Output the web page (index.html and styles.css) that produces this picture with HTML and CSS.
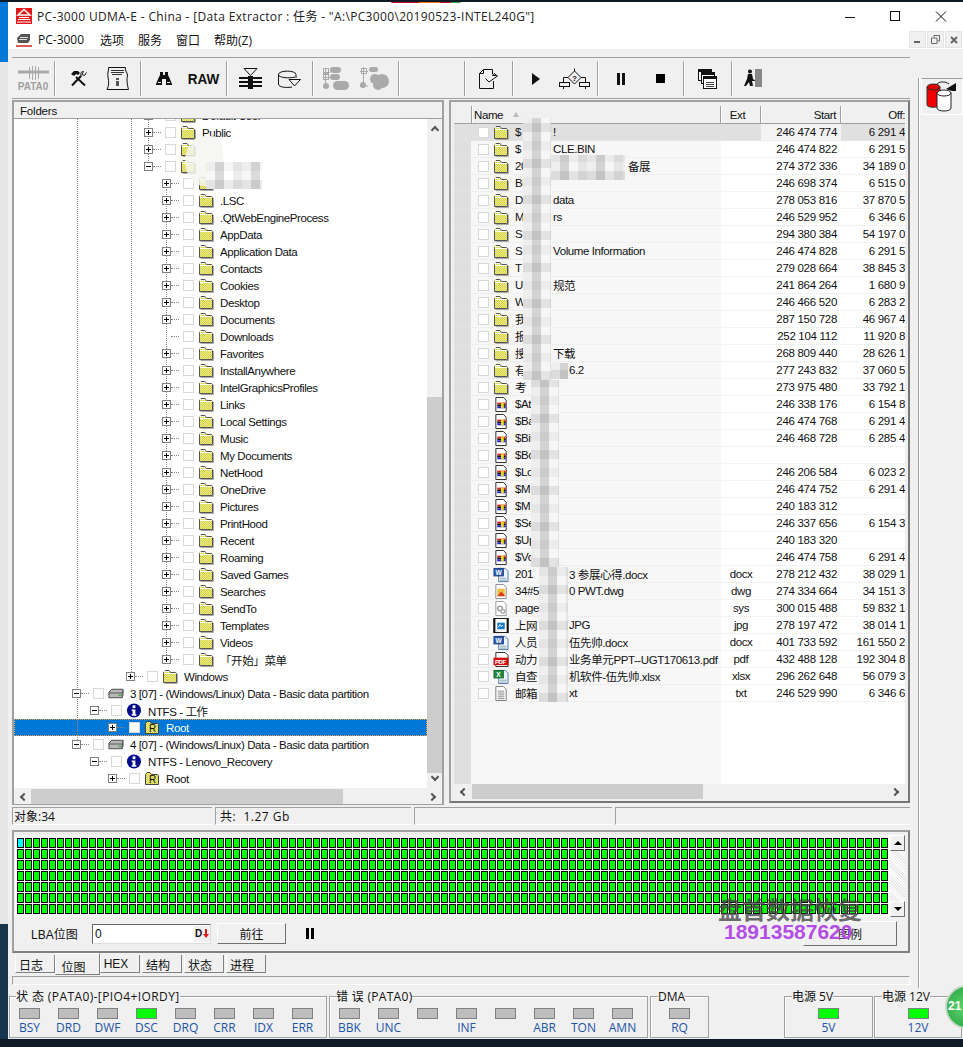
FILE: index.html
```html
<!DOCTYPE html>
<html>
<head>
<meta charset="utf-8">
<title>PC-3000 UDMA-E</title>
<link rel="stylesheet" href="styles.css">
</head>
<body>
<svg class="defs" width="0" height="0">
	<defs>
		<pattern id="dith" width="2" height="2" patternUnits="userSpaceOnUse"><rect width="2" height="2" fill="#ffff00"/><rect width="1" height="1" fill="#c4c4c4"/><rect x="1" y="1" width="1" height="1" fill="#c4c4c4"/></pattern>
	</defs>
	<symbol id="fo" viewBox="0 0 16 15"><path d="M1.500 13.500V3.500L3 1.500H7L8.500 3.500H13.500L14.500 4.500V13.500Z" fill="url(#dith)" stroke="#555"/><path d="M2 2.500H7M2 4.500H13.500" stroke="#fff"/><path d="M15.500 5V14.500H2.500" fill="none" stroke="#aaa"/></symbol>
	<symbol id="root" viewBox="0 0 16 15"><path d="M1.500 13.500V3.500L3 1.500H6L7.500 3.500H13.500L14.500 4.500V13.500Z" fill="url(#dith)" stroke="#444"/><text x="5" y="12" font-size="10" font-family="Liberation Sans" fill="#111">R</text></symbol>
	<symbol id="disk" viewBox="0 0 17 11"><path d="M1 4L4 1H16V7L15 10H1Z" fill="#b8b8b8" stroke="#444"/><path d="M1 5H15V10M15 5L16 2" fill="none" stroke="#555"/><path d="M11 7.500H14" stroke="#2a2"/></symbol>
	<symbol id="info" viewBox="0 0 16 16"><circle cx="8" cy="8" r="7.500" fill="#000a8a"/><rect x="6.500" y="2.500" width="3" height="3" fill="#fff"/><path d="M5.500 7H9.500V12H10.500V13.500H5.500V12H6.500V8.500H5.500Z" fill="#fff"/></symbol>
	<symbol id="sysf" viewBox="0 0 16 16"><path d="M2.500 .5H10.500L13.500 3.500V15.500H2.500Z" fill="#fff" stroke="#222"/><rect x="4" y="6" width="9" height="2" fill="#e02020"/><rect x="4" y="8" width="9" height="2" fill="#111"/><rect x="4" y="10" width="9" height="2" fill="#2020d0"/><rect x="8" y="6" width="3" height="6" fill="#e8d820"/></symbol>
	<symbol id="word" viewBox="0 0 16 16"><path d="M5.500 1.500H12.500L15.500 4.500V15.500H5.500Z" fill="#eef4ff" stroke="#5578a8"/><rect x=".5" y="1.500" width="10" height="8" fill="#2a5cb0" stroke="#1a3c80"/><text x="2" y="8" font-size="7" font-weight="700" font-family="Liberation Sans" fill="#fff">W</text><path d="M7 12H14M7 14H14" stroke="#8aa"/></symbol>
	<symbol id="xls" viewBox="0 0 16 16"><path d="M5.500 1.500H12.500L15.500 4.500V15.500H5.500Z" fill="#eef4ff" stroke="#5578a8"/><rect x=".5" y="1.500" width="10" height="8" fill="#1f8a3c" stroke="#176a2c"/><text x="3" y="8" font-size="7" font-weight="700" font-family="Liberation Sans" fill="#fff">X</text><path d="M7 12H14M7 14H14" stroke="#8aa"/></symbol>
	<symbol id="dwg" viewBox="0 0 16 16"><path d="M2.500 .5H10.500L13.500 3.500V15.500H2.500Z" fill="#fff" stroke="#888"/><rect x="4" y="5" width="8" height="8" fill="#f2c040"/><path d="M4 13L8 8L12 12V13Z" fill="#d83a20"/></symbol>
	<symbol id="gear" viewBox="0 0 16 16"><path d="M2.500 .5H10.500L13.500 3.500V15.500H2.500Z" fill="#fff" stroke="#999"/><circle cx="7" cy="8" r="2.500" fill="none" stroke="#999" stroke-width="1.500"/><circle cx="10" cy="11" r="2" fill="none" stroke="#aaa" stroke-width="1.500"/></symbol>
	<symbol id="jpg" viewBox="0 0 16 16"><rect x=".5" y=".5" width="15" height="15" fill="#fff" stroke="#111"/><rect x="0" y="0" width="2" height="16" fill="#111"/><rect x="14" y="0" width="2" height="16" fill="#111"/><rect x="4" y="5" width="8" height="7" fill="#1878d0"/><path d="M5 10L7 7L8.500 9L10 7.500" fill="none" stroke="#fff"/></symbol>
	<symbol id="pdf" viewBox="0 0 16 16"><path d="M2.500 .5H12.500L15.500 3.500V15.500H2.500Z" fill="#fff" stroke="#222"/><rect x="0" y="6" width="16" height="8" fill="#d01010"/><text x="1.500" y="12.800" font-size="6.500" font-weight="700" font-family="Liberation Sans" fill="#fff">PDF</text></symbol>
	<symbol id="txt" viewBox="0 0 16 16"><path d="M2.500 .5H10.500L13.500 3.500V15.500H2.500Z" fill="#fff" stroke="#777"/><path d="M4.500 5.500H11.500M4.500 7.500H11.500M4.500 9.500H11.500M4.500 11.500H11.500M4.500 13.500H11.500" stroke="#888"/></symbol>
</svg>

<div class="shell">
	<div class="strip"></div>
	<div class="win">
		<div class="notch"></div>
		<div class="titlebar">
			<svg class="appicon" viewBox="0 0 16 16"><rect width="16" height="16" fill="#e01818"/><path d="M8 1.500L14 7H2Z" fill="none" stroke="#fff" stroke-width="1.500"/><path d="M3 9.500H13M2 11.500H14M1 14H15" stroke="#fff"/></svg>
			<span class="title">PC-3000 UDMA-E - China - [Data Extractor : 任务 - "A:\PC3000\20190523-INTEL240G"]</span>
			<svg class="winbtns" viewBox="0 0 118 12" width="118" height="12"><path d="M0 6.500H10" stroke="#111"/><rect x="45.500" y=".5" width="9" height="9" fill="none" stroke="#111"/><path d="M91 .5L101 10.500M101 .5L91 10.500" stroke="#111"/></svg>
		</div>
		<div class="menubar">
			<svg class="menuicon" viewBox="0 0 16 15"><path d="M1 6L5 2H14V8L12 11H2Z" fill="#555"/><path d="M3 7.500H11M4 5.500H12" stroke="#ddd"/><path d="M0 14H16" stroke="#d02020" stroke-width="1.500"/></svg>
			<span class="menu m1">PC-3000</span><span class="menu m2">选项</span><span class="menu m2">服务</span><span class="menu m2">窗口</span><span class="menu">帮助(Z)</span>
			<div class="mdi">
				<span class="mdibtn"><svg width="7" height="7" viewBox="0 0 7 7"><path d="M0 6H6" stroke="#666" stroke-width="2"/></svg></span>
				<span class="mdibtn"><svg width="9" height="9" viewBox="0 0 9 9"><path d="M3 2V.5H8.500V6H6.500M.5 3H6V8.500H.5Z" fill="none" stroke="#666"/></svg></span>
				<span class="mdibtn"><svg width="8" height="8" viewBox="0 0 8 8"><path d="M1 1L7 7M7 1L1 7" stroke="#666" stroke-width="2"/></svg></span>
			</div>
		</div>

		<div class="upper">
			<div class="col">
				<div class="toolbar">
					<div class="tgroup tg-pata">
						<svg width="31" height="14" viewBox="0 0 31 14"><path d="M0 6H31" stroke="#aaa" stroke-width="3"/><path d="M11.500 1V13M14.500 0V14M17.500 0V14M20.500 1V13" stroke="#aaa"/></svg>
						<span class="pata">PATA0</span>
					</div>
					<div class="tgroup">
						<span class="tbtn"><svg width="17" height="17" viewBox="0 0 17 17"><path d="M2 15.500L11 6" fill="none" stroke="#111" stroke-width="2"/><path d="M1 4L4 1H8L10 3L8 5L6 4L4 6Z" fill="#111"/><path d="M15 15.500L6 7" fill="none" stroke="#111" stroke-width="2"/><path d="M16.500 2.500L14.500 5.500L12 4.500L13.500 1.500C11 1 10 4 11.500 6.500" fill="none" stroke="#111"/></svg></span>
						<span class="tbtn"><svg width="23" height="23" viewBox="0 0 23 23"><path d="M2.500 .5H19.500C18.500 3 21 5 21.500 8C20.500 13 21 17 22.500 22.500H1C3 19 3 15 2 10C1 6 3 4 2.500 .5Z" fill="none" stroke="#111"/><path d="M5 3.500H18M5 5.500H18M6 7.500H16" stroke="#333"/><rect x="10" y="11" width="3" height="2" fill="#555"/><rect x="10" y="14" width="3" height="5" fill="#555"/></svg></span>
					</div>
					<div class="tgroup">
						<span class="tbtn"><svg width="16" height="13" viewBox="0 0 16 13"><path d="M4 0H7V3H9V0H12V3L13 5L16 12V13H10V7H6V13H0V12L3 5L4 3Z" fill="#111"/><path d="M2 10.500H5M11 10.500H14" stroke="#eee"/></svg></span>
						<span class="tbtn raw">RAW</span>
					</div>
					<div class="tgroup">
						<span class="tbtn"><svg width="23" height="21" viewBox="0 0 23 21"><path d="M5 .5H18L11.500 7.500Z" fill="#f0f0f0" stroke="#111"/><path d="M0 10H23M0 14H23M0 18H23" stroke="#111" stroke-width="2"/><path d="M9 8H14V21H9Z" fill="#111"/></svg></span>
						<span class="tbtn"><svg width="23" height="18" viewBox="0 0 23 18"><path d="M.5 4.500C.5 0 18 0 18 4.500V8M.5 4.500V14C.5 17.500 9 18 14 17M.5 4.500C.5 8 12 8.500 17 7" fill="none" stroke="#111"/><path d="M11 9.500H22.500L16.500 16Z" fill="#f0f0f0" stroke="#111"/></svg></span>
					</div>
					<div class="tgroup">
						<span class="tbtn"><svg width="27" height="24" viewBox="0 0 27 24"><path d="M2.500 2V22M0 5.500H7M0 10.500H7M0 20H6" stroke="#aaa"/><rect x=".5" y="1.500" width="5" height="5" fill="none" stroke="#aaa"/><rect x=".5" y="7.500" width="5" height="5" fill="none" stroke="#aaa"/><rect x="7" y="0" width="11" height="6" rx="3" fill="#aaa"/><rect x="7" y="7" width="10" height="6" rx="3" fill="#aaa"/><rect x="10" y="14" width="16" height="9" rx="4.500" fill="#aaa"/><circle cx="3" cy="19" r="3" fill="#aaa"/></svg></span>
						<span class="tbtn"><svg width="30" height="25" viewBox="0 0 30 25"><path d="M3.500 1V22M0 5.500H8M0 20H8" stroke="#aaa"/><rect x="1.500" y="2.500" width="5" height="5" fill="none" stroke="#aaa"/><rect x="9" y="1" width="9" height="5" rx="2.500" fill="#aaa"/><circle cx="15" cy="13" r="5" fill="#aaa"/><circle cx="22" cy="15" r="7" fill="#aaa"/><circle cx="18" cy="19" r="5" fill="#aaa"/><circle cx="3" cy="19" r="3" fill="#aaa"/></svg></span>
					</div>
					<div class="tgroup tg-empty"></div>
					<div class="tgroup tg-one">
						<span class="tbtn"><svg width="21" height="21" viewBox="0 0 21 21"><path d="M5.500 1.500H14.500V6M5.500 1.500L1.500 5.500V20.500H15.500V13M1.500 5.500H5.500V1.500" fill="none" stroke="#111"/><path d="M7.500 10.500L11 14L19.500 8L16 5.500L14.500 7.500H18" fill="#f0f0f0" stroke="#111"/></svg></span>
					</div>
					<div class="tgroup tg-85">
						<span class="tbtn"><svg width="8" height="12" viewBox="0 0 8 12"><path d="M0 0L8 6L0 12Z" fill="#111"/></svg></span>
						<span class="tbtn"><svg width="31" height="21" viewBox="0 0 31 21"><path d="M15.500 .5V3M15.500 3L22 9.500L15.500 16L9 9.500Z" fill="#f0f0f0" stroke="#111"/><path d="M9 9.500H4.500V14M22 9.500H26.500V14" fill="none" stroke="#111"/><rect x=".5" y="14.500" width="10" height="4" fill="none" stroke="#111"/><rect x="20.500" y="14.500" width="10" height="4" fill="none" stroke="#111"/><path d="M4.500 19V21M26.500 19V21" stroke="#111"/><text x="13" y="13" font-size="8" font-weight="700" font-family="Liberation Sans" fill="#111">?</text></svg></span>
					</div>
					<div class="tgroup">
						<span class="tbtn"><svg width="8" height="12" viewBox="0 0 8 12"><path d="M0 0H3V12H0ZM5 0H8V12H5Z" fill="#111"/></svg></span>
						<span class="tbtn"><svg width="9" height="9" viewBox="0 0 9 9"><rect width="9" height="9" fill="#000"/></svg></span>
					</div>
					<div class="tgroup tg-one">
						<span class="tbtn"><svg width="19" height="20" viewBox="0 0 19 20"><rect x=".5" y=".5" width="13" height="11" fill="#fff" stroke="#111"/><rect x="3.500" y="3.500" width="13" height="11" fill="#fff" stroke="#111"/><rect x="5.500" y="7.500" width="13" height="12" fill="#fff" stroke="#111"/><path d="M1 2H13M4 5H16M6 9H18" stroke="#111" stroke-width="2"/><path d="M8 13.500H16M8 15.500H16M8 17.500H16" stroke="#444"/></svg></span>
					</div>
					<div class="tgroup tg-last">
						<svg width="19" height="19" viewBox="0 0 19 19"><circle cx="6" cy="2.500" r="2" fill="#111"/><path d="M4 5H8L9 10L12 12L8 12L9 17H6L5 13L2 17H0L3 10Z" fill="#111"/><rect x="11" y="0" width="7" height="18" fill="#888"/></svg>
					</div>
				</div>

				<div class="work">
					<div class="panel left">
						<div class="phead">Folders</div>
						<div class="treewrap">
							<div class="tree">
								<i class="guide g1"></i><i class="guide g2"></i><i class="guide g3"></i><i class="guide g4"></i>
								<div class="rows">
									<div class="row lv5"><i class="exp"></i><i class="stub"></i><i class="cb"></i><svg class="ic"><use href="#fo"/></svg><span>Default User</span></div>
									<div class="row lv5"><i class="exp"></i><i class="stub"></i><i class="cb"></i><svg class="ic"><use href="#fo"/></svg><span>Public</span></div>
									<div class="row lv5"><i class="exp"></i><i class="stub"></i><i class="cb"></i><svg class="ic"><use href="#fo"/></svg></div>
									<div class="row lv5"><i class="exp minus"></i><i class="stub"></i><i class="cb"></i><svg class="ic"><use href="#fo"/></svg></div>
									<div class="row lv6"><i class="exp"></i><i class="stub"></i><i class="cb"></i><svg class="ic"><use href="#fo"/></svg><span>.</span></div>
									<div class="row lv6"><i class="exp"></i><i class="stub"></i><i class="cb"></i><svg class="ic"><use href="#fo"/></svg><span>.LSC</span></div>
									<div class="row lv6"><i class="exp"></i><i class="stub"></i><i class="cb"></i><svg class="ic"><use href="#fo"/></svg><span>.QtWebEngineProcess</span></div>
									<div class="row lv6"><i class="exp"></i><i class="stub"></i><i class="cb"></i><svg class="ic"><use href="#fo"/></svg><span>AppData</span></div>
									<div class="row lv6"><i class="exp"></i><i class="stub"></i><i class="cb"></i><svg class="ic"><use href="#fo"/></svg><span>Application Data</span></div>
									<div class="row lv6"><i class="exp"></i><i class="stub"></i><i class="cb"></i><svg class="ic"><use href="#fo"/></svg><span>Contacts</span></div>
									<div class="row lv6"><i class="exp"></i><i class="stub"></i><i class="cb"></i><svg class="ic"><use href="#fo"/></svg><span>Cookies</span></div>
									<div class="row lv6"><i class="exp"></i><i class="stub"></i><i class="cb"></i><svg class="ic"><use href="#fo"/></svg><span>Desktop</span></div>
									<div class="row lv6"><i class="exp"></i><i class="stub"></i><i class="cb"></i><svg class="ic"><use href="#fo"/></svg><span>Documents</span></div>
									<div class="row lv6"><i class="exp none"></i><i class="stub"></i><i class="cb"></i><svg class="ic"><use href="#fo"/></svg><span>Downloads</span></div>
									<div class="row lv6"><i class="exp"></i><i class="stub"></i><i class="cb"></i><svg class="ic"><use href="#fo"/></svg><span>Favorites</span></div>
									<div class="row lv6"><i class="exp"></i><i class="stub"></i><i class="cb"></i><svg class="ic"><use href="#fo"/></svg><span>InstallAnywhere</span></div>
									<div class="row lv6"><i class="exp"></i><i class="stub"></i><i class="cb"></i><svg class="ic"><use href="#fo"/></svg><span>IntelGraphicsProfiles</span></div>
									<div class="row lv6"><i class="exp"></i><i class="stub"></i><i class="cb"></i><svg class="ic"><use href="#fo"/></svg><span>Links</span></div>
									<div class="row lv6"><i class="exp"></i><i class="stub"></i><i class="cb"></i><svg class="ic"><use href="#fo"/></svg><span>Local Settings</span></div>
									<div class="row lv6"><i class="exp"></i><i class="stub"></i><i class="cb"></i><svg class="ic"><use href="#fo"/></svg><span>Music</span></div>
									<div class="row lv6"><i class="exp"></i><i class="stub"></i><i class="cb"></i><svg class="ic"><use href="#fo"/></svg><span>My Documents</span></div>
									<div class="row lv6"><i class="exp"></i><i class="stub"></i><i class="cb"></i><svg class="ic"><use href="#fo"/></svg><span>NetHood</span></div>
									<div class="row lv6"><i class="exp"></i><i class="stub"></i><i class="cb"></i><svg class="ic"><use href="#fo"/></svg><span>OneDrive</span></div>
									<div class="row lv6"><i class="exp"></i><i class="stub"></i><i class="cb"></i><svg class="ic"><use href="#fo"/></svg><span>Pictures</span></div>
									<div class="row lv6"><i class="exp"></i><i class="stub"></i><i class="cb"></i><svg class="ic"><use href="#fo"/></svg><span>PrintHood</span></div>
									<div class="row lv6"><i class="exp"></i><i class="stub"></i><i class="cb"></i><svg class="ic"><use href="#fo"/></svg><span>Recent</span></div>
									<div class="row lv6"><i class="exp"></i><i class="stub"></i><i class="cb"></i><svg class="ic"><use href="#fo"/></svg><span>Roaming</span></div>
									<div class="row lv6"><i class="exp"></i><i class="stub"></i><i class="cb"></i><svg class="ic"><use href="#fo"/></svg><span>Saved Games</span></div>
									<div class="row lv6"><i class="exp"></i><i class="stub"></i><i class="cb"></i><svg class="ic"><use href="#fo"/></svg><span>Searches</span></div>
									<div class="row lv6"><i class="exp"></i><i class="stub"></i><i class="cb"></i><svg class="ic"><use href="#fo"/></svg><span>SendTo</span></div>
									<div class="row lv6"><i class="exp"></i><i class="stub"></i><i class="cb"></i><svg class="ic"><use href="#fo"/></svg><span>Templates</span></div>
									<div class="row lv6"><i class="exp"></i><i class="stub"></i><i class="cb"></i><svg class="ic"><use href="#fo"/></svg><span>Videos</span></div>
									<div class="row lv6"><i class="exp"></i><i class="stub"></i><i class="cb"></i><svg class="ic"><use href="#fo"/></svg><span>「开始」菜单</span></div>
									<div class="row lv4"><i class="exp"></i><i class="stub"></i><i class="cb"></i><svg class="ic"><use href="#fo"/></svg><span>Windows</span></div>
									<div class="row lv1"><i class="exp minus"></i><i class="stub"></i><i class="cb"></i><svg class="ic ic-disk"><use href="#disk"/></svg><span>3 [07] - (Windows/Linux) Data - Basic data partition</span></div>
									<div class="row lv2"><i class="exp minus"></i><i class="stub"></i><i class="cb"></i><svg class="ic"><use href="#info"/></svg><span>NTFS - 工作</span></div>
									<div class="row lv3 sel"><i class="exp"></i><i class="stub"></i><i class="cb"></i><svg class="ic"><use href="#root"/></svg><span>Root</span></div>
									<div class="row lv1"><i class="exp minus"></i><i class="stub"></i><i class="cb"></i><svg class="ic ic-disk"><use href="#disk"/></svg><span>4 [07] - (Windows/Linux) Data - Basic data partition</span></div>
									<div class="row lv2"><i class="exp minus"></i><i class="stub"></i><i class="cb"></i><svg class="ic"><use href="#info"/></svg><span>NTFS - Lenovo_Recovery</span></div>
									<div class="row lv3"><i class="exp"></i><i class="stub"></i><i class="cb"></i><svg class="ic"><use href="#root"/></svg><span>Root</span></div>
								</div>
								<div class="blob"></div>
								<div class="mosaic tm2"></div>
							</div>
							<div class="vscroll">
								<span class="arr up"></span>
								<div class="vthumb"></div>
								<span class="arr down"></span>
							</div>
						</div>
						<div class="hscroll hs-left">
							<span class="arr lf"></span>
							<div class="hthumb ht-left"></div>
							<span class="arr rt"></span>
						</div>
					</div>

					<div class="panel right">
						<div class="lhead">
							<span class="hc"></span>
							<span class="hc hname">Name<i class="sort"></i></span>
							<span class="hc hext">Ext</span>
							<span class="hc hnum">Start</span>
							<span class="hc hnum hoff">Off:</span>
						</div>
						<div class="list">
							<div class="lrow first"><i></i><span class="nm"><i class="cb"></i><svg class="ic"><use href="#fo"/></svg><span class="pa">$</span><span>!</span></span><span></span><span class="num">246 474 774</span><span class="num">6 291 4</span></div>
							<div class="lrow"><i></i><span class="nm"><i class="cb"></i><svg class="ic"><use href="#fo"/></svg><span class="pa">$</span><span>CLE.BIN</span></span><span></span><span class="num">246 474 822</span><span class="num">6 291 5</span></div>
							<div class="lrow"><i></i><span class="nm"><i class="cb"></i><svg class="ic"><use href="#fo"/></svg><span class="pc">20</span><span>备展</span></span><span></span><span class="num">274 372 336</span><span class="num">34 189 0</span></div>
							<div class="lrow"><i></i><span class="nm"><i class="cb"></i><svg class="ic"><use href="#fo"/></svg><span>Bi</span></span><span></span><span class="num">246 698 374</span><span class="num">6 515 0</span></div>
							<div class="lrow"><i></i><span class="nm"><i class="cb"></i><svg class="ic"><use href="#fo"/></svg><span class="pa">D</span><span>data</span></span><span></span><span class="num">278 053 816</span><span class="num">37 870 5</span></div>
							<div class="lrow"><i></i><span class="nm"><i class="cb"></i><svg class="ic"><use href="#fo"/></svg><span class="pa">M</span><span>rs</span></span><span></span><span class="num">246 529 952</span><span class="num">6 346 6</span></div>
							<div class="lrow"><i></i><span class="nm"><i class="cb"></i><svg class="ic"><use href="#fo"/></svg><span>S</span></span><span></span><span class="num">294 380 384</span><span class="num">54 197 0</span></div>
							<div class="lrow"><i></i><span class="nm"><i class="cb"></i><svg class="ic"><use href="#fo"/></svg><span class="pa">S</span><span>Volume Information</span></span><span></span><span class="num">246 474 828</span><span class="num">6 291 5</span></div>
							<div class="lrow"><i></i><span class="nm"><i class="cb"></i><svg class="ic"><use href="#fo"/></svg><span>T</span></span><span></span><span class="num">279 028 664</span><span class="num">38 845 3</span></div>
							<div class="lrow"><i></i><span class="nm"><i class="cb"></i><svg class="ic"><use href="#fo"/></svg><span class="pa">U</span><span>规范</span></span><span></span><span class="num">241 864 264</span><span class="num">1 680 9</span></div>
							<div class="lrow"><i></i><span class="nm"><i class="cb"></i><svg class="ic"><use href="#fo"/></svg><span>Wi</span></span><span></span><span class="num">246 466 520</span><span class="num">6 283 2</span></div>
							<div class="lrow"><i></i><span class="nm"><i class="cb"></i><svg class="ic"><use href="#fo"/></svg><span>我</span></span><span></span><span class="num">287 150 728</span><span class="num">46 967 4</span></div>
							<div class="lrow"><i></i><span class="nm"><i class="cb"></i><svg class="ic"><use href="#fo"/></svg><span>报</span></span><span></span><span class="num">252 104 112</span><span class="num">11 920 8</span></div>
							<div class="lrow"><i></i><span class="nm"><i class="cb"></i><svg class="ic"><use href="#fo"/></svg><span class="pa">搜</span><span>下载</span></span><span></span><span class="num">268 809 440</span><span class="num">28 626 1</span></div>
							<div class="lrow"><i></i><span class="nm"><i class="cb"></i><svg class="ic"><use href="#fo"/></svg><span class="pb">有</span><span>6.2</span></span><span></span><span class="num">277 243 832</span><span class="num">37 060 5</span></div>
							<div class="lrow"><i></i><span class="nm"><i class="cb"></i><svg class="ic"><use href="#fo"/></svg><span>考</span></span><span></span><span class="num">273 975 480</span><span class="num">33 792 1</span></div>
							<div class="lrow"><i></i><span class="nm"><i class="cb"></i><svg class="ic"><use href="#sysf"/></svg><span>$At</span></span><span></span><span class="num">246 338 176</span><span class="num">6 154 8</span></div>
							<div class="lrow"><i></i><span class="nm"><i class="cb"></i><svg class="ic"><use href="#sysf"/></svg><span>$Ba</span></span><span></span><span class="num">246 474 768</span><span class="num">6 291 4</span></div>
							<div class="lrow"><i></i><span class="nm"><i class="cb"></i><svg class="ic"><use href="#sysf"/></svg><span>$Bit</span></span><span></span><span class="num">246 468 728</span><span class="num">6 285 4</span></div>
							<div class="lrow"><i></i><span class="nm"><i class="cb"></i><svg class="ic"><use href="#sysf"/></svg><span>$Bo</span></span><span></span><span class="num"></span><span class="num"></span></div>
							<div class="lrow"><i></i><span class="nm"><i class="cb"></i><svg class="ic"><use href="#sysf"/></svg><span>$Lo</span></span><span></span><span class="num">246 206 584</span><span class="num">6 023 2</span></div>
							<div class="lrow"><i></i><span class="nm"><i class="cb"></i><svg class="ic"><use href="#sysf"/></svg><span>$M</span></span><span></span><span class="num">246 474 752</span><span class="num">6 291 4</span></div>
							<div class="lrow"><i></i><span class="nm"><i class="cb"></i><svg class="ic"><use href="#sysf"/></svg><span>$M</span></span><span></span><span class="num">240 183 312</span><span class="num"></span></div>
							<div class="lrow"><i></i><span class="nm"><i class="cb"></i><svg class="ic"><use href="#sysf"/></svg><span>$Se</span></span><span></span><span class="num">246 337 656</span><span class="num">6 154 3</span></div>
							<div class="lrow"><i></i><span class="nm"><i class="cb"></i><svg class="ic"><use href="#sysf"/></svg><span>$Up</span></span><span></span><span class="num">240 183 320</span><span class="num"></span></div>
							<div class="lrow"><i></i><span class="nm"><i class="cb"></i><svg class="ic"><use href="#sysf"/></svg><span>$Vo</span></span><span></span><span class="num">246 474 758</span><span class="num">6 291 4</span></div>
							<div class="lrow"><i></i><span class="nm"><i class="cb"></i><svg class="ic"><use href="#word"/></svg><span class="pb">201</span><span>3 参展心得.docx</span></span><span class="ext">docx</span><span class="num">278 212 432</span><span class="num">38 029 1</span></div>
							<div class="lrow"><i></i><span class="nm"><i class="cb"></i><svg class="ic"><use href="#dwg"/></svg><span class="pb">34#5</span><span>0 PWT.dwg</span></span><span class="ext">dwg</span><span class="num">274 334 664</span><span class="num">34 151 3</span></div>
							<div class="lrow"><i></i><span class="nm"><i class="cb"></i><svg class="ic"><use href="#gear"/></svg><span>page</span></span><span class="ext">sys</span><span class="num">300 015 488</span><span class="num">59 832 1</span></div>
							<div class="lrow"><i></i><span class="nm"><i class="cb"></i><svg class="ic"><use href="#jpg"/></svg><span class="pb">上网</span><span>JPG</span></span><span class="ext">jpg</span><span class="num">278 197 472</span><span class="num">38 014 1</span></div>
							<div class="lrow"><i></i><span class="nm"><i class="cb"></i><svg class="ic"><use href="#word"/></svg><span class="pb">人员</span><span>伍先帅.docx</span></span><span class="ext">docx</span><span class="num">401 733 592</span><span class="num">161 550 2</span></div>
							<div class="lrow"><i></i><span class="nm"><i class="cb"></i><svg class="ic"><use href="#pdf"/></svg><span class="pb">动力</span><span>业务单元PPT--UGT170613.pdf</span></span><span class="ext">pdf</span><span class="num">432 488 128</span><span class="num">192 304 8</span></div>
							<div class="lrow"><i></i><span class="nm"><i class="cb"></i><svg class="ic"><use href="#xls"/></svg><span class="pb">自查</span><span>机软件-伍先帅.xlsx</span></span><span class="ext">xlsx</span><span class="num">296 262 648</span><span class="num">56 079 3</span></div>
							<div class="lrow"><i></i><span class="nm"><i class="cb"></i><svg class="ic"><use href="#txt"/></svg><span class="pb">邮箱</span><span>xt</span></span><span class="ext">txt</span><span class="num">246 529 990</span><span class="num">6 346 6</span></div>
							<div class="mosaic lm1"></div>
							<div class="mosaic lm2"></div>
							<div class="mosaic lm3"></div>
							<div class="mosaic lm4"></div>
							<div class="mosaic lm5"></div>
							<div class="mosaic lm6"></div>
						</div>
						<div class="hscroll hs-right">
							<span class="arr lf"></span>
							<div class="hthumb ht-right"></div>
							<span class="arr rt"></span>
						</div>
					</div>
				</div>

				<div class="statusbar">
					<span class="st s1">对象:34</span>
					<span class="st s2">共:&nbsp; 1.27 Gb</span>
					<span class="st s3"></span>
					<span class="st s4"></span>
				</div>

				<div class="bitmap">
					<div class="bmtop">
						<svg class="cells" width="873" height="79" viewBox="0 0 873 79">
							<defs>
								<pattern id="cell" width="8" height="11" patternUnits="userSpaceOnUse">
									<rect width="7" height="10" fill="#000"/>
									<rect x="1" y="1" width="5" height="8" fill="#00ff00"/>
								</pattern>
							</defs>
							<rect x="0" y="0" width="872" height="77" fill="url(#cell)"/>
							<rect x="1" y="1" width="5" height="8" fill="#00ffff"/>
						</svg>
						<div class="bmscroll">
							<span class="bmbtn"><i class="tri-up"></i></span>
							<span class="bmbtn"><i class="tri-down"></i></span>
						</div>
					</div>
					<div class="bmctl">
						<span class="lba">LBA位图</span>
						<div class="lbainput"><span>0</span><span class="dbtn">D<svg width="6" height="9" viewBox="0 0 6 9"><path d="M2 0H4V5H6L3 9L0 5H2Z" fill="#e01818"/></svg></span></div>
						<span class="btn go">前往</span>
						<span class="pausebig"></span>
						<span class="btn legend">图例</span>
					</div>
					<div class="wm wm1">盘首数据恢复</div>
					<div class="wm wm2">18913587620</div>
				</div>

				<div class="tabs">
					<span class="tab t-a">日志</span>
					<span class="tab on">位图</span>
					<span class="tab t-b">HEX</span>
					<span class="tab t-c">结构</span>
					<span class="tab t-d">状态</span>
					<span class="tab t-e">进程</span>
				</div>
				<div class="tabbody"></div>
			</div>

			<div class="rail">
				<div class="railtab">
					<svg width="32" height="31" viewBox="0 0 32 31">
						<path d="M1 6V24C1 27 14 27 14 24V6Z" fill="#f00000" stroke="#333"/>
						<ellipse cx="7.500" cy="6" rx="6.500" ry="3" fill="#e00000" stroke="#333"/>
						<path d="M11 12V27C11 31 25 31 25 27V12Z" fill="#fff" stroke="#222"/>
						<ellipse cx="18" cy="12" rx="7" ry="3" fill="#fff" stroke="#222"/>
						<path d="M10 4C13 0 19 0 23 3" fill="none" stroke="#222"/>
						<path d="M20 8L30 2V10H26Z" fill="#111"/>
					</svg>
				</div>
			</div>
		</div>

		<div class="leds">
			<fieldset class="grp g-state">
				<legend>状 态 (PATA0)-[PIO4+IORDY]</legend>
				<div class="ledrow">
					<div class="led"><i></i><b>BSY</b></div>
					<div class="led"><i></i><b>DRD</b></div>
					<div class="led"><i></i><b>DWF</b></div>
					<div class="led on"><i></i><b>DSC</b></div>
					<div class="led"><i></i><b>DRQ</b></div>
					<div class="led"><i></i><b>CRR</b></div>
					<div class="led"><i></i><b>IDX</b></div>
					<div class="led"><i></i><b>ERR</b></div>
				</div>
			</fieldset>
			<fieldset class="grp g-err">
				<legend>错 误 (PATA0)</legend>
				<div class="ledrow">
					<div class="led"><i></i><b>BBK</b></div>
					<div class="led"><i></i><b>UNC</b></div>
					<div class="led"><i></i><b></b></div>
					<div class="led"><i></i><b>INF</b></div>
					<div class="led"><i></i><b></b></div>
					<div class="led"><i></i><b>ABR</b></div>
					<div class="led"><i></i><b>TON</b></div>
					<div class="led"><i></i><b>AMN</b></div>
				</div>
			</fieldset>
			<fieldset class="grp g-dma">
				<legend>DMA</legend>
				<div class="ledrow">
					<div class="led"><i></i><b>RQ</b></div>
				</div>
			</fieldset>
			<fieldset class="grp g-5v">
				<legend>电源 5V</legend>
				<div class="ledrow">
					<div class="led on"><i></i><b>5V</b></div>
				</div>
			</fieldset>
			<fieldset class="grp g-12v">
				<legend>电源 12V</legend>
				<div class="ledrow">
					<div class="led on"><i></i><b>12V</b></div>
				</div>
			</fieldset>
		</div>
		<div class="ball">21</div>
	</div>
</div>
</body>
</html>
```

FILE: styles.css
```css
html, body {
	margin: 0;
	height: 1047px;
	overflow: hidden;
	background: #0e1a26;
}
body {
	font-family: "Liberation Sans", "Noto Sans CJK SC", sans-serif;
	font-size: 11px;
	color: #111;
}
.defs {
	position: absolute;
}
i {
	font-style: normal;
}
b {
	font-weight: normal;
}

.shell {
	display: flex;
	padding-top: 2px;
	height: 1037px;
}
.strip {
	width: 8px;
	background: linear-gradient(to bottom, #0078d7 0 60px, #e6e6e6 60px 922px, #17354c 922px);
}
.win {
	position: relative;
	width: 955px;
	height: 1037px;
	background: #f0f0f0;
	overflow: hidden;
}
.notch {
	position: absolute;
	left: 382px;
	top: -2px;
	width: 72px;
	height: 3px;
	border-radius: 0 0 4px 4px;
	background: linear-gradient(to right, #c8102e 0 40%, #f07818 40% 70%, #c8102e 70% 85%, #30b040 85%);
}

/* title + menu */
.titlebar {
	display: flex;
	align-items: center;
	height: 28px;
	background: #fff;
	padding-left: 8px;
}
.appicon {
	width: 16px;
	height: 16px;
	margin-right: 5px;
}
.title {
	font-family: "Open Sans", "Noto Sans CJK SC", sans-serif;
	font-size: 12px;
	letter-spacing: .34px;
	white-space: nowrap;
	color: #222;
}
.winbtns {
	margin-left: auto;
	margin-top: 1px;
}
.menubar {
	display: flex;
	align-items: center;
	height: 19px;
	background: #fff;
	padding-left: 8px;
	font-family: "Open Sans", "Noto Sans CJK SC", sans-serif;
	font-size: 12px;
}
.menuicon {
	width: 16px;
	height: 15px;
	margin-right: 6px;
}
.menu {
	white-space: nowrap;
}
.m1 {
	width: 62px;
}
.m2 {
	width: 38px;
}
.mdi {
	display: flex;
	gap: 1px;
	margin-left: auto;
	margin-right: 1px;
}
.mdibtn {
	display: flex;
	align-items: center;
	justify-content: center;
	width: 17px;
	height: 17px;
	background: #f0f0f0;
	border: 1px solid #e4e4e4;
	box-sizing: border-box;
}

/* main area */
.upper {
	display: flex;
	height: 939px;
}
.col {
	width: 898px;
	margin-left: 4px;
	padding-top: 8px;
	box-sizing: border-box;
}
.rail {
	width: 45px;
	margin-left: 8px;
	margin-top: 29px;
	height: 910px;
	box-sizing: border-box;
	border-left: 1px solid #a0a0a0;
	box-shadow: inset 1px 0 0 #fff;
	padding-left: 2px;
}
.railtab {
	display: flex;
	align-items: center;
	justify-content: center;
	width: 42px;
	height: 37px;
	box-sizing: border-box;
	border: 1px solid #fff;
	border-top-color: #a0a0a0;
}

/* toolbar */
.toolbar {
	display: flex;
	height: 42px;
	box-sizing: border-box;
	border-top: 1px solid #a0a0a0;
	border-bottom: 1px solid #a0a0a0;
	padding: 3px 0 2px;
}
.tgroup {
	display: flex;
	align-items: center;
	justify-content: center;
	width: 86px;
	box-sizing: border-box;
	border-right: 1px solid #a0a0a0;
	box-shadow: 1px 0 0 #fff;
	flex: none;
}
.tg-pata {
	width: 43px;
	flex-direction: column;
	gap: 1px;
}
.tg-empty {
	width: 66px;
}
.tg-one {
	width: 48px;
}
.tg-85 {
	width: 85px;
}
.tg-last {
	border: 0;
	box-shadow: none;
	width: 42px;
}
.pata {
	font-size: 10px;
	font-weight: 700;
	color: #a0a0a0;
}
.tbtn {
	display: flex;
	align-items: center;
	justify-content: center;
	width: 39px;
}
.raw {
	font-size: 15px;
	font-weight: 700;
	color: #111;
	transform: scaleX(.9);
}

/* the two panes */
.work {
	display: flex;
	gap: 5px;
	margin-top: 1px;
	height: 705px;
}
.panel {
	box-sizing: border-box;
	border: 2px solid #a0a0a0;
	height: 705px;
}
.left {
	width: 432px;
}
.right {
	width: 461px;
	padding: 4px 3px 3px 3px;
	height: 703px;
	border-right-color: #777;
	border-bottom-color: #777;
}
.phead {
	height: 16px;
	line-height: 18px;
	padding-left: 6px;
	background: #f0f0f0;
	border-bottom: 1px solid #a0a0a0;
	font-size: 11.5px;
	letter-spacing: -.2px;
}
.treewrap {
	display: flex;
	height: 669px;
}
.tree {
	position: relative;
	width: 413px;
	background: #fff;
	overflow: hidden;
}
.rows {
	margin-top: -12px;
}
.row {
	display: flex;
	align-items: center;
	height: 17px;
	white-space: nowrap;
	font-size: 11.5px;
	letter-spacing: -.4px;
}
.lv1 { padding-left: 58px; }
.lv2 { padding-left: 76px; }
.lv3 { padding-left: 94px; }
.lv4 { padding-left: 112px; }
.lv5 { padding-left: 130px; }
.lv6 { padding-left: 148px; }
.row.sel {
	background: #0078d7;
	color: #fff;
	outline: 1px dotted #f0a040;
	outline-offset: -1px;
}
.exp {
	position: relative;
	z-index: 1;
	width: 9px;
	height: 9px;
	box-sizing: border-box;
	border: 1px solid #808080;
	background: #fff;
	flex: none;
}
.exp::before {
	content: "";
	position: absolute;
	left: 1px;
	top: 3px;
	width: 5px;
	height: 1px;
	background: #000;
}
.exp::after {
	content: "";
	position: absolute;
	left: 3px;
	top: 1px;
	width: 1px;
	height: 5px;
	background: #000;
}
.exp.minus::after {
	display: none;
}
.exp.none {
	border: 0;
	background: none;
}
.exp.none::before, .exp.none::after {
	display: none;
}
.stub {
	width: 8px;
	margin-right: 4px;
	border-top: 1px dotted #888;
	flex: none;
}
.cb {
	width: 11px;
	height: 11px;
	box-sizing: border-box;
	border: 1px solid #d8d8d8;
	background: #fff;
	flex: none;
}
.ic {
	width: 16px;
	height: 15px;
	margin: 0 6px 0 4px;
	flex: none;
}
.ic-disk {
	height: 11px;
}
.guide {
	position: absolute;
	top: 0;
	width: 0;
	border-left: 1px dotted #888;
}
.g1 { left: 63px; height: 627px; }
.g2 { left: 117px; height: 559px; }
.g3 { left: 134px; height: 42px; }
.g4 { left: 152px; top: 70px; height: 472px; }

/* pixelated patches over private names */
.mosaic {
	position: absolute;
	z-index: 2;
	background-color: #f6f6f6;
	background-image:
		repeating-linear-gradient(90deg, rgba(0,0,0,.03) 0 9px, rgba(0,0,0,.14) 9px 18px, transparent 18px 27px, rgba(0,0,0,.07) 27px 36px),
		repeating-linear-gradient(0deg, rgba(0,0,0,.08) 0 9px, transparent 9px 18px, rgba(0,0,0,.04) 18px 27px, transparent 27px 36px);
}
.blob {
	position: absolute;
	z-index: 2;
	left: 171px;
	top: 17px;
	width: 38px;
	height: 50px;
	border-radius: 50% 30% 40% 50%;
	background: rgba(245, 245, 240, .85);
}
.tm2 { left: 192px; top: 43px; width: 56px; height: 27px; background-color: #fff; }
.lm1 { left: 69px; top: -6px; width: 28px; height: 122px; }
.lm2 { left: 97px; top: 31px; width: 74px; height: 25px; }
.lm3 { left: 69px; top: 116px; width: 28px; height: 140px; }
.lm4 { left: 77px; top: 256px; width: 28px; height: 187px; }
.lm5 { left: 85px; top: 443px; width: 29px; height: 135px; }
.lm6 { left: 97px; top: 239px; width: 17px; height: 16px; }

.vscroll {
	position: relative;
	width: 15px;
	background: #f0f0f0;
	display: flex;
	flex-direction: column;
	justify-content: space-between;
	padding: 5px 0;
	box-sizing: border-box;
}
.vthumb {
	position: absolute;
	left: 0;
	top: 278px;
	width: 15px;
	height: 376px;
	background: #cdcdcd;
}
.arr {
	width: 6px;
	height: 6px;
	box-sizing: border-box;
	border-top: 2px solid #555;
	border-left: 2px solid #555;
	margin: 0 auto;
	flex: none;
}
.arr.up { transform: rotate(45deg); margin-top: 3px; }
.arr.down { transform: rotate(225deg); margin-bottom: 3px; }
.arr.lf { transform: rotate(-45deg); margin: 0 0 0 7px; }
.arr.rt { transform: rotate(135deg); margin: 0 7px 0 auto; }
.hscroll {
	display: flex;
	align-items: center;
	height: 15px;
	background: #f0f0f0;
}
.hthumb {
	height: 15px;
	background: #cdcdcd;
}
.hs-left {
	margin-top: 1px;
}
.ht-left {
	width: 312px;
	margin-left: 4px;
}
.ht-right {
	width: 231px;
	margin-left: 5px;
}
.hs-right {
	margin-top: 0;
	width: 451px;
}

.lhead {
	display: grid;
	grid-template-columns: 18px 249px 40px 80px 64px;
	height: 18px;
	width: 451px;
	border-bottom: 1px solid #a0a0a0;
	box-sizing: border-box;
	font-size: 11.5px;
	letter-spacing: -.4px;
}
.hc {
	line-height: 18px;
	border-right: 1px solid #a0a0a0;
	box-shadow: 1px 0 0 #fff;
	padding: 0 4px 0 2px;
	overflow: hidden;
}
.hname {
	display: flex;
	align-items: center;
}
.sort {
	margin-left: 10px;
	border-left: 3px solid transparent;
	border-right: 3px solid transparent;
	border-bottom: 5px solid #bbb;
}
.hext {
	text-align: center;
	padding: 0 6px 0 0;
}
.hnum {
	text-align: right;
}
.hoff {
	border: 0;
	box-shadow: none;
	padding-right: 0;
}
.list {
	position: relative;
	width: 451px;
	height: 660px;
	background: linear-gradient(to right, #dfdfdf 0 17px, #f7f7f7 17px 267px, #fff 267px);
}
.lrow {
	display: grid;
	grid-template-columns: 17px 250px 40px 80px 64px;
	align-items: center;
	height: 17px;
	box-sizing: border-box;
	border-bottom: 1px dotted #e6e6e6;
	white-space: nowrap;
	font-size: 11.5px;
	letter-spacing: -.4px;
}
.lrow.first {
	background: linear-gradient(to right, #e0e0e0 0 307px, #f3f3f3 307px 387px, #e0e0e0 387px);
}
.nm {
	display: flex;
	align-items: center;
	padding-left: 7px;
	overflow: hidden;
}
.pa, .pb, .pc {
	display: inline-block;
	flex: none;
}
.pa { width: 38px; }
.pb { width: 54px; }
.pc { width: 113px; }
.ext {
	text-align: center;
}
.num {
	text-align: right;
	padding-right: 4px;
	letter-spacing: -.3px;
}
.lrow .num:last-child {
	padding-right: 0;
	overflow: hidden;
}

/* status line */
.statusbar {
	display: flex;
	gap: 3px;
	margin-top: 2px;
	height: 18px;
	font-family: "Open Sans", "Noto Sans CJK SC", sans-serif;
	font-size: 12px;
}
.st {
	box-sizing: border-box;
	border-top: 1px solid #a0a0a0;
	border-left: 1px solid #a0a0a0;
	border-bottom: 1px solid #fff;
	line-height: 17px;
	padding-left: 1px;
	white-space: nowrap;
}
.s1 { width: 200px; }
.s2 { width: 196px; padding-left: 4px; letter-spacing: .5px; }
.s3 { width: 198px; }
.s4 { width: 295px; }

/* sector bitmap */
.bitmap {
	position: relative;
	margin-top: 5px;
	height: 123px;
	box-sizing: border-box;
	border: 2px solid;
	border-color: #a0a0a0 #808080 #808080 #a0a0a0;
	padding: 3px 3px 0 1px;
}
.bmtop {
	display: flex;
	justify-content: space-between;
	height: 82px;
	background: #fff;
}
.cells {
	margin: 3px 0 0 2px;
	flex: none;
}
.bmscroll {
	display: flex;
	flex-direction: column;
	justify-content: space-between;
	width: 16px;
	background-color: #f6f6f6;
	background-image: repeating-linear-gradient(45deg, #e8e8e8 0 1px, #fff 1px 2px);
}
.bmbtn {
	display: flex;
	align-items: center;
	justify-content: center;
	height: 16px;
	background: #f0f0f0;
	border: 1px solid;
	border-color: #fff #707070 #707070 #fff;
	box-sizing: border-box;
}
.tri-up {
	border-left: 4px solid transparent;
	border-right: 4px solid transparent;
	border-bottom: 4px solid #000;
}
.tri-down {
	border-left: 4px solid transparent;
	border-right: 4px solid transparent;
	border-top: 4px solid #000;
}
.bmctl {
	display: flex;
	align-items: center;
	height: 33px;
	padding-left: 16px;
	font-size: 12px;
}
.lba {
	width: 61px;
}
.lbainput {
	display: flex;
	align-items: center;
	justify-content: space-between;
	width: 119px;
	height: 20px;
	box-sizing: border-box;
	background: #fff;
	border: 1px solid;
	border-color: #666 #ddd #ddd #666;
	padding-left: 2px;
}
.dbtn {
	display: flex;
	align-items: center;
	justify-content: center;
	gap: 1px;
	width: 16px;
	height: 16px;
	font-size: 10px;
	font-weight: 700;
	background: #f0f0f0;
}
.btn {
	display: flex;
	align-items: center;
	justify-content: center;
	box-sizing: border-box;
	background: #f0f0f0;
	border: 1px solid;
	border-color: #fff #707070 #707070 #fff;
}
.go {
	width: 69px;
	height: 21px;
	margin-left: 6px;
}
.pausebig {
	width: 8px;
	height: 11px;
	margin-left: 20px;
	box-sizing: border-box;
	border-left: 3px solid #000;
	border-right: 3px solid #000;
}
.legend {
	width: 94px;
	height: 25px;
	margin-left: auto;
	margin-right: 8px;
}
.wm {
	position: absolute;
	white-space: nowrap;
	font-weight: 700;
}
.wm1 {
	left: 704px;
	top: 59px;
	font-size: 24px;
	color: rgba(70, 70, 70, .8);
}
.wm2 {
	left: 710px;
	top: 88px;
	font-size: 21px;
	color: #b44ce6;
}

/* tabs */
.tabs {
	display: flex;
	align-items: flex-start;
	height: 23px;
	padding-left: 3px;
	font-size: 12px;
}
.tab {
	display: flex;
	align-items: center;
	justify-content: center;
	height: 18px;
	margin-top: 2px;
	box-sizing: border-box;
	padding: 1px 8px 0 0;
	border-right: 1px solid #808080;
	border-bottom: 1px solid #808080;
	border-left: 1px solid #fff;
}
.tab.on {
	height: 22px;
	margin-top: 0;
	width: 45px;
	padding-top: 4px;
	border-top: 1px solid #fff;
}
.t-a { width: 40px; }
.t-b { width: 40px; margin-right: 2px; }
.t-c { width: 40px; margin-right: 2px; }
.t-d { width: 40px; margin-right: 2px; }
.t-e { width: 40px; }
.tabbody {
	height: 9px;
	box-sizing: border-box;
	border-top: 1px solid #a0a0a0;
	border-left: 1px solid #a0a0a0;
	border-bottom: 1px solid #fff;
	border-right: 1px solid #fff;
}

/* led groups */
.leds {
	display: flex;
	height: 50px;
	padding-left: 1px;
}
.grp {
	margin: 0;
	padding: 0;
	min-width: 0;
	height: 50px;
	box-sizing: border-box;
	border: 1px solid #a0a0a0;
	box-shadow: inset 1px 1px 0 #fff;
	flex: none;
}
.grp legend {
	padding: 0;
	margin-left: 6px;
	height: 16px;
	line-height: 18px;
	font-family: "Open Sans", "Noto Sans CJK SC", sans-serif;
	font-size: 12px;
	white-space: nowrap;
}
.g-state legend { letter-spacing: .4px; }
.g-err legend { letter-spacing: .3px; }
.g-state { width: 318px; margin-right: 2px; }
.g-err { width: 319px; margin-right: 2px; }
.g-dma { width: 59px; margin-right: 75px; }
.g-5v { width: 89px; margin-right: 1px; }
.g-12v { width: 88px; }
.g-dma legend { margin-left: 7px; }
.g-5v legend, .g-12v legend { margin-left: 7px; }
.ledrow {
	display: flex;
	padding-top: 4px;
}
.g-dma .ledrow, .g-5v .ledrow, .g-12v .ledrow {
	justify-content: center;
}
.led {
	display: flex;
	flex-direction: column;
	align-items: center;
	width: 39px;
	flex: none;
}
.led i {
	width: 19px;
	height: 9px;
	background: #bdbdbd;
	border: 1px solid #808080;
	box-sizing: content-box;
}
.led.on i {
	background: #00ff00;
}
.led b {
	margin-top: 1px;
	height: 16px;
	line-height: 16px;
	font-family: "Open Sans", sans-serif;
	font-size: 12px;
	color: #1c54a8;
}
.ball {
	position: absolute;
	left: 937px;
	top: 983px;
	width: 44px;
	height: 44px;
	box-sizing: border-box;
	padding: 12px 0 0 1px;
	border-radius: 50%;
	border: 2px solid #c8d8c8;
	background: radial-gradient(circle at 40% 50%, #5bd06a, #1a9a3a);
	color: #fff;
	font-size: 12px;
	font-weight: 700;
}
```
